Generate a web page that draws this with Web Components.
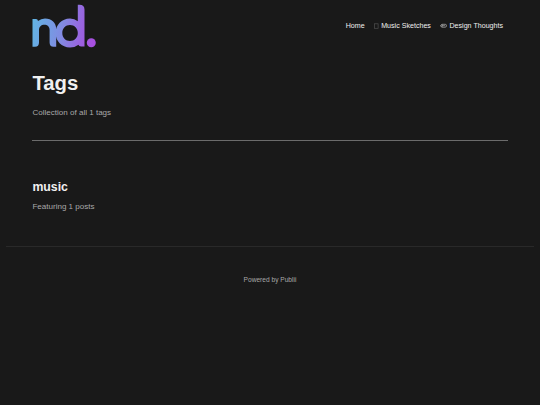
<!DOCTYPE html>
<html lang="en">
<head>
<meta charset="utf-8">
<title>Tags</title>
<style>
html, body{
    margin:0;
    background:#191919;
}

body{
    min-height:405px;
    font-family:"Liberation Sans", Arial, sans-serif;
    color:#e8e8e8;
}
</style>
</head>
<body>
<tags-page></tags-page>

<script>
class SiteLogo extends HTMLElement{

    constructor(){
        super();
        this.shadow = this.attachShadow({mode:'open'});
        this.render();
    }

    render(){
        this.shadow.innerHTML = `
        <style>
        :host{
            display:block;
            width:64px;
            height:44px;
        }

        svg{
            display:block;
        }
        </style>
        <svg width="64" height="44" viewBox="0 0 64 44">
            <defs>
                <linearGradient id="fade" gradientUnits="userSpaceOnUse" x1="0" y1="22" x2="62" y2="32">
                    <stop offset="0" stop-color="#62b4e4"/>
                    <stop offset="0.5" stop-color="#8389e2"/>
                    <stop offset="0.8" stop-color="#9a62df"/>
                    <stop offset="1" stop-color="#a84fe0"/>
                </linearGradient>
            </defs>
            <g fill="url(#fade)">
                <path d="M.5 15H4Q5.8 15 6 17Q9 14.5 13 14.5C19.8 14.5 24.2 19 24.2 25V42.7H21.5Q17.6 42.7 17.6 38.5V26C17.6 22.6 15.4 20.7 12.3 20.7C9.2 20.7 7 22.7 7 26V38.5Q7 42.7 3 42.7H.5Z"/>
                <path fill-rule="evenodd" d="M45.8 .8H47.5Q52.5 .8 52.5 5.8V42.5H49Q46.8 42.5 46.5 40.7Q43 43.5 38 43.5C29.6 43.5 23.6 37 23.6 29C23.6 21 29.6 14.5 38 14.5Q42.6 14.5 45.8 17.2ZM38 21C33.5 21 30.3 24.5 30.3 29C30.3 33.5 33.5 37 38 37C42.5 37 45.8 33.5 45.8 29C45.8 24.5 42.5 21 38 21Z"/>
                <circle cx="59.3" cy="38.7" r="4.5"/>
            </g>
        </svg>
        `;
    }
}

class NavItem extends HTMLElement{

    constructor(){
        super();
        this.shadow = this.attachShadow({mode:'open'});
        this.render();
    }

    render(){
        this.shadow.innerHTML = `
        <style>
        :host{
            display:flex;
            align-items:center;
            font-size:7.1px;
            line-height:10px;
            white-space:nowrap;
            color:#f0f0f0;
        }
        </style>
        <slot name="icon"></slot>
        <slot></slot>
        `;
    }
}

class SiteHeader extends HTMLElement{

    constructor(){
        super();
        this.shadow = this.attachShadow({mode:'open'});
        this.render();
    }

    render(){
        this.shadow.innerHTML = `
        <style>
        :host{
            display:flex;
            justify-content:space-between;
            align-items:flex-start;
            height:52px;
            padding:4px 37px 0 32px;
            box-sizing:border-box;
        }

        nav{
            display:flex;
            gap:9.6px;
            padding-top:17px;
        }

        svg{
            display:block;
            margin-right:2px;
        }

        </style>
        <site-logo></site-logo>
        <nav>
            <nav-item>Home</nav-item>
            <nav-item>
                <svg slot="icon" width="5" height="6" viewBox="0 0 5 6">
                    <rect x=".5" y=".8" width="3.6" height="4.5" fill="none" stroke="#505050" stroke-width=".7"/>
                </svg>Music Sketches
            </nav-item>
            <nav-item>
                <svg slot="icon" width="7" height="6" viewBox="0 0 7 6">
                    <path d="M.3 2.8L2 1.3H5.2Q6.5 1.3 6.5 2.7T5.2 4.2H2ZM2 1.3V4.2M2 2.7H5.2" fill="none" stroke="#b8b8b8" stroke-width=".7"/>
                </svg>Design Thoughts
            </nav-item>
        </nav>
        `;
    }
}

class PageHero extends HTMLElement{

    constructor(){
        super();
        this.shadow = this.attachShadow({mode:'open'});
        this.render();
    }

    render(){
        this.shadow.innerHTML = `
        <style>
        :host{
            display:block;
            margin:0 32px;
            padding-top:19px;
            height:69px;
            border-bottom:1px solid #6b6b6b;
        }

        h1{
            margin:0 0 0 .4px;
            font-size:20.3px;
            line-height:24px;
            color:#f0f0f0;
        }

        p{
            margin:12px 0 0 .4px;
            font-size:8.05px;
            line-height:12px;
            color:#a8a8a8;
        }
        </style>
        <h1><slot name="title"></slot></h1>
        <p><slot></slot></p>
        `;
    }
}

class TagCard extends HTMLElement{

    constructor(){
        super();
        this.shadow = this.attachShadow({mode:'open'});
        this.render();
    }

    render(){
        this.shadow.innerHTML = `
        <style>
        :host{
            display:block;
            box-sizing:border-box;
            height:105px;
            padding:38px 32.4px 0;
        }

        h2{
            margin:0;
            font-size:12.3px;
            line-height:16px;
            color:#f0f0f0;
        }

        p{
            margin:6px 0 0;
            font-size:8.05px;
            line-height:12px;
            color:#a8a8a8;
        }
        </style>
        <h2><slot name="name"></slot></h2>
        <p><slot></slot></p>
        `;
    }
}

class SiteFooter extends HTMLElement{

    constructor(){
        super();
        this.shadow = this.attachShadow({mode:'open'});
        this.render();
    }

    render(){
        this.shadow.innerHTML = `
        <style>
        :host{
            display:block;
            margin:0 6px;
            padding-top:28px;
            border-top:1px solid #292929;
            text-align:center;
            font-size:6.6px;
            line-height:10px;
            color:#a8a8a8;
        }
        </style>
        <slot></slot>
        `;
    }
}

class TagsPage extends HTMLElement{

    constructor(){
        super();
        this.shadow = this.attachShadow({mode:'open'});
        this.render();
    }

    render(){
        this.shadow.innerHTML = `
        <style>
        :host{
            display:block;
        }
        </style>
        <site-header></site-header>
        <page-hero><span slot="title">Tags</span>Collection of all 1 tags</page-hero>
        <tag-card><span slot="name">music</span>Featuring 1 posts</tag-card>
        <site-footer>Powered by Publii</site-footer>
        `;
    }
}

customElements.define('site-logo', SiteLogo);
customElements.define('nav-item', NavItem);
customElements.define('site-header', SiteHeader);
customElements.define('page-hero', PageHero);
customElements.define('tag-card', TagCard);
customElements.define('site-footer', SiteFooter);
customElements.define('tags-page', TagsPage);
</script>
</body>
</html>
